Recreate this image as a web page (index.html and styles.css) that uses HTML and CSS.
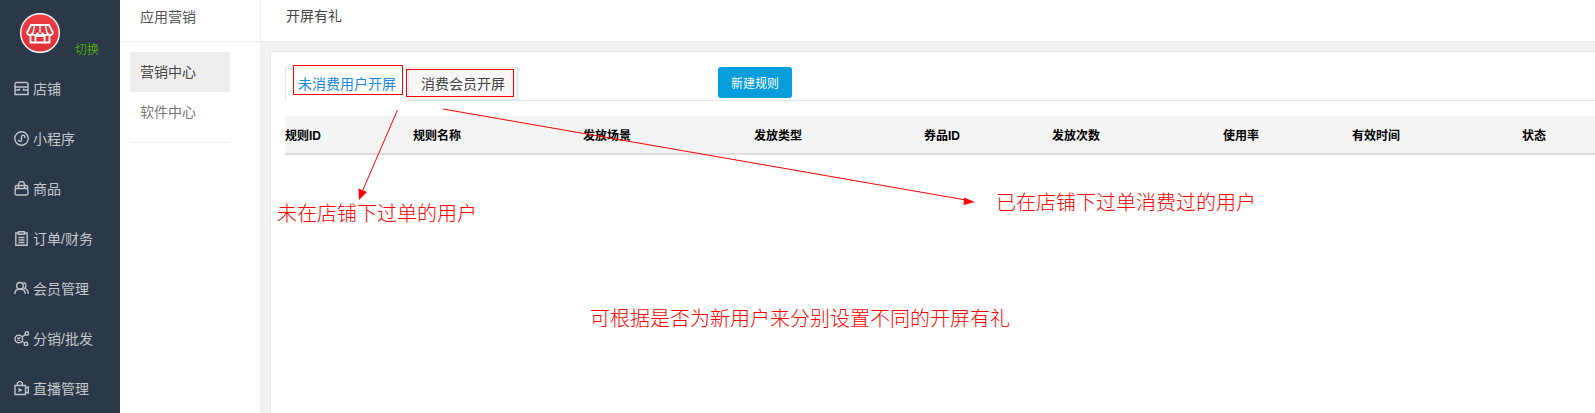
FILE: index.html
```html
<!DOCTYPE html>
<html lang="zh">
<head>
<meta charset="utf-8">
<title>开屏有礼</title>
<link rel="stylesheet" href="styles.css">
</head>
<body>
<div class="app">
  <nav class="side">
    <div class="logo-row">
      <svg class="logo" viewBox="0 0 40 40">
        <defs><linearGradient id="lg" x1="0" y1="0" x2="0" y2="1"><stop offset="0" stop-color="#ee3d42"/><stop offset="1" stop-color="#dd3238"/></linearGradient></defs>
        <circle cx="20" cy="20" r="19.300" fill="url(#lg)" stroke="#fff" stroke-width="1.400"/>
        <path d="M11 12h18l4 7.500a2.800 2.800 0 0 1-5.200 1.200 2.900 2.900 0 0 1-5.200 0 2.900 2.900 0 0 1-5.200 0 2.900 2.900 0 0 1-5.200 0A2.800 2.800 0 0 1 7 19.500z" fill="none" stroke="#fff" stroke-width="1.800"/>
        <path d="M14.500 13l-1.500 7M20 13v7M25.500 13l1.500 7" fill="none" stroke="#fff" stroke-width="1.400"/>
        <path d="M10.500 22.500v7h19v-7M15.500 29v-6h9v6" fill="none" stroke="#fff" stroke-width="1.800"/>
      </svg>
      <span class="switch">切换</span>
    </div>
    <a class="nav-item"><svg viewBox="0 0 15 15"><path d="M2.500 1.500h10a1.500 1.500 0 0 1 1.500 1.500v3H1V3a1.500 1.500 0 0 1 1.500-1.500zM1 6v7.500h13V6M1 9h4.500V7.500M14 9H9.500V7.500"/></svg>店铺</a>
    <a class="nav-item"><svg viewBox="0 0 15 15"><circle cx="7.500" cy="7.500" r="6.700"/><path d="M4.300 8.800a1.700 1.700 0 0 0 3.200.6V5.700a1.700 1.700 0 1 1 3 1.300"/></svg>小程序</a>
    <a class="nav-item"><svg viewBox="0 0 15 15"><path d="M2.500 4.500h10a1 1 0 0 1 1 1l.5 7a1.500 1.500 0 0 1-1.500 1.500h-10A1.500 1.500 0 0 1 1 12.500l.5-7a1 1 0 0 1 1-1zM4.500 7V3.500a3 3 0 0 1 6 0V7M1.500 7.500h12"/></svg>商品</a>
    <a class="nav-item"><svg viewBox="0 0 15 15"><path d="M4.500 2H1.800v12.300h11.400V2h-2.700M4.500.8h6V3.300h-6zM4.500 6.500h6M4.500 9h6M4.500 11.500h6"/></svg>订单/财务</a>
    <a class="nav-item"><svg viewBox="0 0 15 15"><circle cx="6" cy="4.800" r="3.300"/><path d="M.8 13c0-3.500 1.800-5 5.200-5s5.200 1.500 5.200 5M9.500 1.500a3.300 3.300 0 0 1 1.200 5.800c2.400.7 3.600 2.600 3.600 5.700"/></svg>会员管理</a>
    <a class="nav-item"><svg viewBox="0 0 15 15"><circle cx="4.800" cy="8" r="3.800"/><path d="M3.300 6.500l3 3M6.300 6.500l-3 3"/><circle cx="12.800" cy="2.500" r="1.700"/><circle cx="12" cy="13" r="1.700"/><path d="M8 6l3.500-2.500M8 10.500l2.700 1.500"/></svg>分销/批发</a>
    <a class="nav-item"><svg viewBox="0 0 15 15"><path d="M1 4.500h10.500v9H1zM11.500 7l2.800-1v6l-2.800-1zM4 4.200a1.700 1.700 0 0 1 .5-3 1.700 1.700 0 0 1 3 .2 1.500 1.500 0 0 1 0 2.800"/><path class="fill" d="M4.500 6.800L8.500 9l-4 2.200z"/></svg>直播管理</a>
  </nav>
  <aside class="sub">
    <div class="sub-title">应用营销</div>
    <ul class="sub-list">
      <li class="sub-item active">营销中心</li>
      <li class="sub-item">软件中心</li>
    </ul>
  </aside>
  <main class="main">
    <header class="top">开屏有礼</header>
    <section class="content">
      <div class="card">
        <div class="bar">
          <div class="tabs">
            <div class="tab on">未消费用户开屏</div>
            <div class="tab">消费会员开屏</div>
          </div>
          <button class="btn">新建规则</button>
        </div>
        <div class="thead">
          <span class="c1">规则ID</span>
          <span class="c2">规则名称</span>
          <span class="c3">发放场景</span>
          <span class="c2">发放类型</span>
          <span class="c1">券品ID</span>
          <span class="c3">发放次数</span>
          <span class="c6">使用率</span>
          <span class="c2">有效时间</span>
          <span class="c9">状态</span>
        </div>
      </div>
    </section>
  </main>
</div>
<div class="overlay">
  <svg class="arrows" viewBox="0 0 1595 413">
    <rect x="293.500" y="65.500" width="109" height="29"/>
    <rect x="406.500" y="69.500" width="107" height="27"/>
    <path d="M397.500 110L362 192M443 109L966 200"/>
    <path class="head" d="M359 200l-.5-11.500 8.500 3.500zM975 202l-11-4.500-.5 7.500z"/>
  </svg>
  <span class="note n1">未在店铺下过单的用户</span>
  <span class="note n2">已在店铺下过单消费过的用户</span>
  <span class="note n3">可根据是否为新用户来分别设置不同的开屏有礼</span>
</div>
</body>
</html>
```
FILE: styles.css
```css
* { box-sizing: border-box; }
html, body { margin: 0; height: 100%; overflow: hidden; background: #fff; }
body { font-family: "Liberation Sans", "Noto Sans CJK SC", sans-serif; font-size: 14px; color: #333; position: relative; }
.app { display: flex; height: 413px; }
.side { width: 120px; flex: none; background: #2a3848; color: #c4c8cc; }
.logo-row { position: relative; height: 63px; padding: 13px 0 0 20px; }
.logo { width: 40px; height: 40px; display: block; }
.switch { position: absolute; left: 75px; top: 43px; font-size: 12px; line-height: 15px; color: #4fa80d; }
.nav-item { display: flex; align-items: center; height: 50px; padding-left: 14px; font-size: 14px; gap: 4px; }
.nav-item svg { width: 15px; height: 15px; fill: none; stroke: #c0c4c8; stroke-width: 1.400; flex: none; }
.nav-item svg .fill { fill: #c0c4c8; stroke: none; }
.sub { width: 141px; flex: none; border-right: 1px solid #f0f0f0; }
.sub-title { height: 42px; border-bottom: 1px solid #eee; padding-left: 20px; line-height: 34px; color: #555; }
.sub-list { list-style: none; width: 100px; margin: 10px 0 0 10px; padding: 0 0 10px; border-bottom: 1px solid #f2f2f2; }
.sub-item { height: 40px; line-height: 40px; padding-left: 10px; color: #777; border-radius: 2px; }
.sub-item.active { background: #eee; color: #444; }
.main { flex: 1; min-width: 0; display: flex; flex-direction: column; }
.top { height: 42px; border-bottom: 1px solid #e8e8e8; padding-left: 25px; line-height: 32px; color: #444; }
.content { flex: 1; background: #f2f2f2; padding: 9px 0 0 9px; }
.card { background: #fff; height: 100%; border: 1px solid #e8e8e8; border-width: 1px 0 0 1px; padding: 15px 0 0 14px; }
.bar { display: flex; align-items: flex-start; height: 34px; border-bottom: 1px solid #e6e6e6; }
.tabs { display: flex; height: 33px; }
.tab { height: 33px; line-height: 33px; padding: 0 12px; border: 1px solid #e6e6e6; background: #f7f7f7; color: #444; white-space: nowrap; }
.tab.on { background: #fff; color: #1989e0; height: 34px; border-bottom: 0; border-top-color: #e6e6e6; }
.tab + .tab { border-left: 0; }
.btn { margin-left: 200px; width: 74px; height: 31px; border: 0; border-radius: 3px; background: #069ddd; color: #fff; font: inherit; font-size: 12px; padding: 0; }
.thead { display: flex; align-items: center; height: 39px; margin-top: 15px; background: #f4f4f4; border-bottom: 2px solid #ddd; font-size: 12px; font-weight: bold; color: #000; }
.thead span { flex: none; }
.c1 { width: 128px; } .c2 { width: 170px; } .c3 { width: 171px; } .c6 { width: 129px; }
.overlay { position: absolute; inset: 0; pointer-events: none; }
.arrows { position: absolute; left: 0; top: 0; width: 1595px; height: 413px; }
.arrows rect, .arrows path { fill: none; stroke: #f00; stroke-width: 1; }
.arrows .head { fill: #f00; stroke: none; }
.note { position: absolute; color: #f00; font-size: 20px; font-weight: 300; line-height: 24px; white-space: nowrap; font-family: "Noto Sans CJK SC", sans-serif; }
.n1 { left: 277px; top: 201px; }
.n2 { left: 996px; top: 190px; }
.n3 { left: 590px; top: 306px; }
```
